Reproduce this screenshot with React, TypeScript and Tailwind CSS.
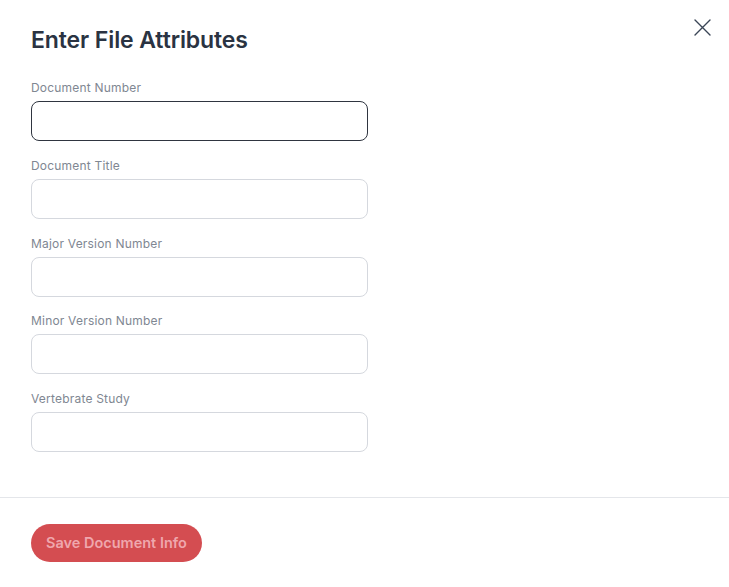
import React from "react";

const FIELDS = [
  "Document Number",
  "Document Title",
  "Major Version Number",
  "Minor Version Number",
  "Vertebrate Study",
];

export default function App() {
  return (
    <div
      className="relative w-[729px] h-[587px] bg-white text-[#2d3748]"
      style={{ fontFamily: "Inter, 'Noto Sans', sans-serif" }}
    >
      <button
        className="absolute right-[18px] top-[19px] text-[#3a4556]"
        aria-label="Close"
      >
        <svg width="17" height="17" viewBox="0 0 17 17" fill="none">
          <path d="M1 1l15 15M16 1L1 16" stroke="currentColor" strokeWidth="1.4" strokeLinecap="round" />
        </svg>
      </button>

      <div className="px-[31px] pt-[26px]">
        <h1 className="text-[23px] leading-[28px] font-semibold tracking-[-0.1px] text-[#2a3342]">
          Enter File Attributes
        </h1>

        <div className="mt-[26px] flex flex-col gap-[16.75px]">
          {FIELDS.map((label, i) => (
            <div key={label} className="flex flex-col">
              <label className="text-[12px] leading-[16px] tracking-[0.2px] text-[#808792]">
                {label}
              </label>
              <input
                className={
                  i === 0
                    ? "mt-[5px] w-[337px] h-[40px] rounded-[8px] border border-[#2f3540] outline-none px-3 text-sm"
                    : "mt-[5px] w-[337px] h-[40px] rounded-[8px] border border-[#d5d8de] outline-none px-3 text-sm"
                }
              />
            </div>
          ))}
        </div>
      </div>

      <div className="mt-[45px] border-t border-[#e4e6ea]" />

      <div className="px-[31px] pt-[26px]">
        <button className="h-[38px] px-[15px] rounded-full bg-[#d44d51] text-[#efa7ad] text-[14.5px] font-semibold">
          Save Document Info
        </button>
      </div>
    </div>
  );
}
